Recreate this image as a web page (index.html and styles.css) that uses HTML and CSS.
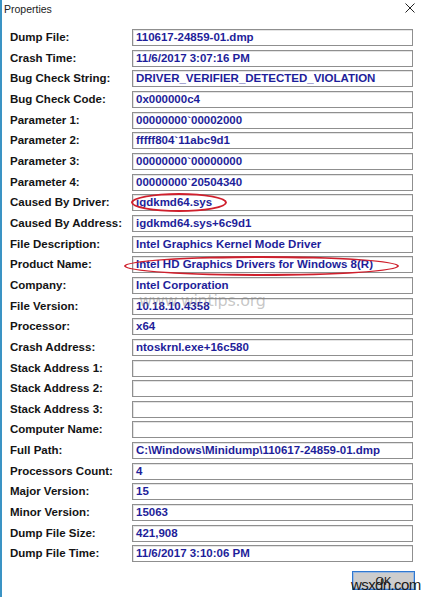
FILE: index.html
```html
<!DOCTYPE html>
<html lang="en">
<head>
<meta charset="UTF-8" />
<title>Properties</title>
<link rel="stylesheet" href="styles.css">
</head>
<body>
<div class="dialog">

  <div class="titlebar">
    <span class="title">Properties</span>
    <svg class="close" width="10" height="10" viewBox="0 0 10 10">
      <path d="M0.5 0.5L9.5 9.5M9.5 0.5L0.5 9.5" stroke="#222" stroke-width="1" fill="none"/>
    </svg>
  </div>

  <!-- dump properties -->
  <div class="fields">
    <label>Dump File:</label><div class="value">110617-24859-01.dmp</div>
    <label>Crash Time:</label><div class="value">11/6/2017 3:07:16 PM</div>
    <label>Bug Check String:</label><div class="value">DRIVER_VERIFIER_DETECTED_VIOLATION</div>
    <label>Bug Check Code:</label><div class="value">0x000000c4</div>
    <label>Parameter 1:</label><div class="value">00000000`00002000</div>
    <label>Parameter 2:</label><div class="value">fffff804`11abc9d1</div>
    <label>Parameter 3:</label><div class="value">00000000`00000000</div>
    <label>Parameter 4:</label><div class="value">00000000`20504340</div>
    <label>Caused By Driver:</label><div class="value">igdkmd64.sys</div>
    <label>Caused By Address:</label><div class="value">igdkmd64.sys+6c9d1</div>
    <label>File Description:</label><div class="value">Intel Graphics Kernel Mode Driver</div>
    <label>Product Name:</label><div class="value">Intel HD Graphics Drivers for Windows 8(R)</div>
    <label>Company:</label><div class="value">Intel Corporation</div>
    <label>File Version:</label><div class="value">10.18.10.4358</div>
    <label>Processor:</label><div class="value">x64</div>
    <label>Crash Address:</label><div class="value">ntoskrnl.exe+16c580</div>
    <label>Stack Address 1:</label><div class="value"></div>
    <label>Stack Address 2:</label><div class="value"></div>
    <label>Stack Address 3:</label><div class="value"></div>
    <label>Computer Name:</label><div class="value"></div>
    <label>Full Path:</label><div class="value">C:\Windows\Minidump\110617-24859-01.dmp</div>
    <label>Processors Count:</label><div class="value">4</div>
    <label>Major Version:</label><div class="value">15</div>
    <label>Minor Version:</label><div class="value">15063</div>
    <label>Dump File Size:</label><div class="value">421,908</div>
    <label>Dump File Time:</label><div class="value">11/6/2017 3:10:06 PM</div>
  </div>

  <div class="actions">
    <button class="ok-btn">OK</button>
  </div>

  <!-- highlight rings -->
  <div class="ring ring-driver"></div>
  <div class="ring ring-product"></div>

  <span class="mark mark-site">www.wintips.org</span>
  <span class="mark mark-ok">wsxdn.com</span>
</div>
</body>
</html>
```

FILE: styles.css
```css
body{margin:0;background:#fff;font-family:"Liberation Sans",Arial,sans-serif}
.dialog{position:relative;width:421px;height:597px;border-left:2px solid #3a93c4;background:#fff;overflow:hidden}

.titlebar{height:22px;display:flex;align-items:flex-start;justify-content:space-between;padding:0 8px 0 2px}
.title{font-size:10.5px;color:#222;line-height:10px;padding-top:4px}
.close{margin-top:3px}

.fields{display:grid;grid-template-columns:122px 281px;grid-auto-rows:20.67px;padding:7px 0 0 8px}
.fields label{font-size:11.5px;font-weight:bold;color:#141414;line-height:17px;white-space:nowrap}
.value{height:17px;box-sizing:border-box;border:1px solid #8f8f8f;box-shadow:inset 1px 1px 0 #e4e4e4;
       padding:0 3px;font-size:11.5px;font-weight:bold;color:#1e1e9a;line-height:15px;white-space:nowrap;overflow:hidden}

.actions{display:flex;justify-content:flex-end;padding:5px 8px 0 0}
.ok-btn{width:63px;height:19px;background:#cdcdcd;border:1px solid #2f78d0;box-shadow:inset 0 0 0 1px #9ab8e0;
        font:11px "Liberation Sans",Arial,sans-serif;color:#111;padding:0}

.ring{position:absolute;box-sizing:border-box;border:2px solid #cf1f2c;border-radius:50%}
.ring-driver{left:129px;top:193px;width:96px;height:19px}
.ring-product{left:122px;top:256px;width:275px;height:20px}

.mark{position:absolute;white-space:nowrap;pointer-events:none}
.mark-site{left:137px;top:291px;font:16px "DejaVu Sans",sans-serif;color:rgba(130,130,130,.45);letter-spacing:-.3px}
.mark-ok{left:349px;top:576px;font:15px "Liberation Sans",Arial,sans-serif;color:#1a1a1a;letter-spacing:-.6px}
```
